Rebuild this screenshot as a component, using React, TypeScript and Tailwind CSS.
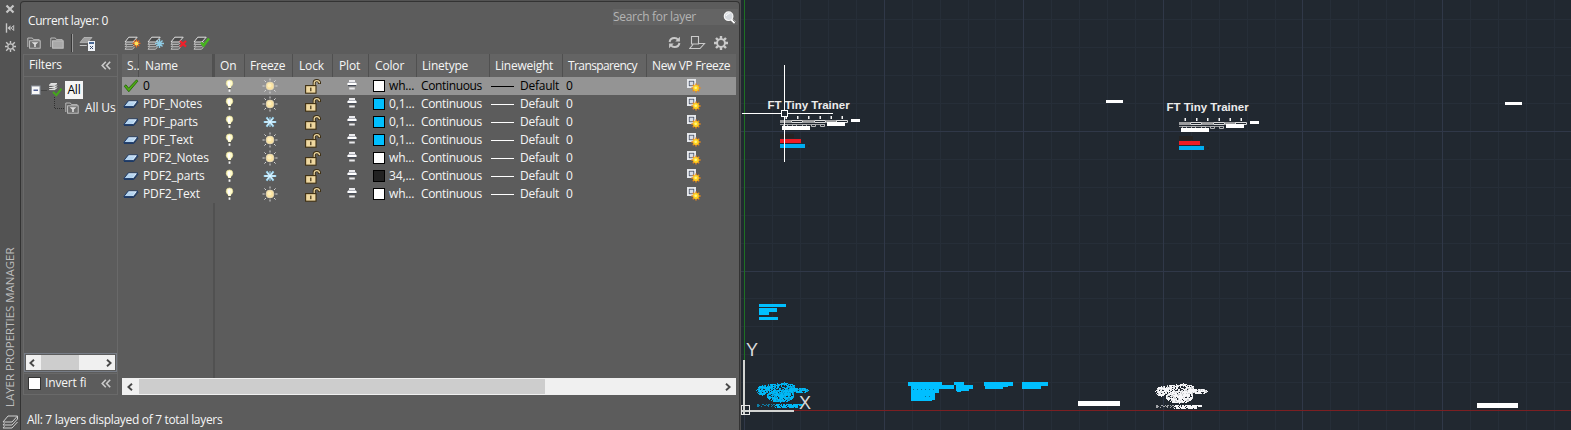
import React from "react";

type Freeze = "sun" | "snow";
type Layer = { name: string; freeze: Freeze; swatch: string; color: string; current?: boolean };

const layers: Layer[] = [
  { name: "0", freeze: "sun", swatch: "#ffffff", color: "wh...", current: true },
  { name: "PDF_Notes", freeze: "sun", swatch: "#00bfff", color: "0,1..." },
  { name: "PDF_parts", freeze: "snow", swatch: "#00bfff", color: "0,1..." },
  { name: "PDF_Text", freeze: "sun", swatch: "#00bfff", color: "0,1..." },
  { name: "PDF2_Notes", freeze: "sun", swatch: "#ffffff", color: "wh..." },
  { name: "PDF2_parts", freeze: "snow", swatch: "#222222", color: "34,..." },
  { name: "PDF2_Text", freeze: "sun", swatch: "#ffffff", color: "wh..." },
];

/* ---------- icons ---------- */

const Check = () => (
  <svg width="16" height="14" viewBox="0 0 16 14" className="block">
    <path d="M1.2 7.2 3 5.8l2.6 3.4L13.6.8l1.2 1.4L5.8 12.8z" fill="#4fae12" stroke="#26640a" strokeWidth="0.9" />
  </svg>
);

const LayerSlab = () => (
  <svg width="16" height="9" viewBox="0 0 16 9" className="block">
    <path d="M5.2 1h9.6L10.4 6.6H.8z" fill="#b4d4f0" stroke="#1d3a66" strokeWidth="1" />
    <path d="M1 7.5h9.8L15.2 2" fill="none" stroke="#1d3a66" strokeWidth="1" />
    <path d="M5.6 1.8h7.6L9.8 5.8" fill="none" stroke="#e8f4ff" strokeWidth="0.8" />
  </svg>
);

const Bulb = () => (
  <svg width="9" height="14" viewBox="0 0 9 14" className="block">
    <circle cx="4.5" cy="4.2" r="3.3" fill="#fffbd0" stroke="#e5dd8c" strokeWidth="0.6" />
    <path d="M2.6 6.5h3.8l-.6 2.6H3.2z" fill="#fffbd0" />
    <path d="M4 2.5v5" stroke="#fff" strokeWidth="2" />
    <rect x="3.2" y="9" width="2.6" height="1.2" fill="#55554a" />
    <rect x="3.6" y="10.4" width="1.8" height="2.4" fill="#f4f4f4" />
  </svg>
);

const Sun = () => (
  <svg width="16" height="16" viewBox="0 0 16 16" className="block">
    <path d="M8 0.5v2M8 13.5v2M.5 8h2.2M13.3 8h2.2M2.4 2.4l1.6 1.6M12 12l1.6 1.6M2.4 13.6l1.6-1.6M12 4l1.6-1.6" stroke="#d4d4d4" strokeWidth="1" />
    <circle cx="8" cy="8" r="3.9" fill="#fbe3a0" stroke="#e2d6b4" strokeWidth="0.9" />
    <circle cx="7.5" cy="7.5" r="2" fill="#fff0bd" />
  </svg>
);

const Snow = () => (
  <svg width="14" height="14" viewBox="0 0 14 14" className="block">
    <path d="M.8 7h12.4M3.5 2.4l7 9.2M3.5 11.6l7-9.2" stroke="#9fd9f5" strokeWidth="2" />
    <path d="M7 2v10" stroke="#9fd9f5" strokeWidth="1" />
    <path d="M2 7h10M4.5 3.7l5 6.6M4.5 10.3l5-6.6" stroke="#e6f7ff" strokeWidth="1" />
  </svg>
);

const OpenLock = () => (
  <svg width="16" height="15" viewBox="0 0 16 15" className="block">
    <path d="M9.2 7V3.8Q9.2 1.6 11.8 1.6 14.6 1.6 14.6 5" fill="none" stroke="#3d2e12" strokeWidth="3" />
    <path d="M9.2 7V3.8Q9.2 1.6 11.8 1.6 14.4 1.6 14.5 4.3" fill="none" stroke="#f0dba4" strokeWidth="1.2" />
    <rect x="0.6" y="6.6" width="10.4" height="7.6" fill="#efd8a0" stroke="#3d2e12" strokeWidth="1.1" />
    <rect x="5.2" y="8.6" width="1.2" height="3.6" fill="#3d2e12" />
  </svg>
);

const Plot = () => (
  <svg width="10" height="12" viewBox="0 0 10 12" className="block">
    <rect x="2" y="1" width="6" height="2" fill="#e9e9ec" />
    <rect x="0.4" y="4" width="9.2" height="2" rx="0.6" fill="#ffffff" />
    <rect x="1" y="3" width="8" height="1" fill="#a9abb3" />
    <rect x="1" y="6" width="8" height="1.2" fill="#474c58" />
    <rect x="2.2" y="8.5" width="5.6" height="2" fill="#e9e9ec" />
  </svg>
);

const VpFreeze = () => (
  <svg width="14" height="14" viewBox="0 0 14 14" className="block">
    <rect x="0.5" y="0.5" width="8" height="8" fill="#fafafa" stroke="#e4e7ec" />
    <rect x="2.2" y="2.2" width="4.6" height="4.6" fill="#d7dce6" stroke="#4a5468" strokeWidth="0.9" />
    <path d="M9 4.4v9.2M4.4 9h9.2M5.8 5.8l6.4 6.4M5.8 12.2l6.4-6.4" stroke="#f08a1a" strokeWidth="1.4" />
    <circle cx="9" cy="9" r="2.9" fill="#ffd21f" />
    <circle cx="8.7" cy="8.7" r="1.3" fill="#fff68a" />
  </svg>
);

const Folder = ({ filter }: { filter?: boolean }) => (
  <svg width="14" height="12" viewBox="0 0 14 12" className="block shrink-0">
    <path d="M.8 10V1h4.6l1 1.6h5.8v1" fill="none" stroke="#b9b9b9" strokeWidth="1" />
    <rect x="2.6" y="3.8" width="10.6" height="7.4" fill={filter ? "#6c6c6c" : "#a8a8a8"} stroke="#c9c9c9" strokeWidth="0.9" />
    {filter && <path d="M4.6 5.2h6.8L8.8 7.6v2.4H7.2V7.6z" fill="#dedede" />}
  </svg>
);

const Stack = ({ children }: { children?: React.ReactNode }) => (
  <svg width="17" height="14" viewBox="0 0 17 14" className="block">
    <path d="M1 10.8l1.5-1.6M1 10.8h7.6l1.6-1.9M1 8.3l1.5-1.6M1 8.3h7.6l2-2.4" fill="none" stroke="#c6c6c6" strokeWidth="1" />
    <path d="M1 13.2h7.6l2-2.4M1 13.2l1.5-1.6" fill="none" stroke="#c6c6c6" strokeWidth="1" />
    <path d="M4.8 1.2h8.4L9 6H1z" fill="#4b4b4b" stroke="#e2e2e2" strokeWidth="1" />
    {children}
  </svg>
);

const StatesIcon = () => (
  <svg width="17" height="16" viewBox="0 0 17 16" className="block">
    <path d="M5 1.5h8L9.4 5.4 8.6 6.6H1z" fill="#a0a0a0" stroke="#bdbdbd" strokeWidth="0.8" />
    <path d="M.8 9.5h7" stroke="#c4c4c4" strokeWidth="1" />
    <rect x="9" y="5" width="7" height="10" fill="#eef2f7" />
    <rect x="10" y="6" width="5" height="2" fill="#4a6a98" />
    <path d="M11 10.5h1M13 10.5h1M12 11.5h1M11 12.5h1M13 12.5h1" stroke="#35486a" strokeWidth="1" />
  </svg>
);

const StripIcons = () => (
  <>
    <svg width="10" height="10" viewBox="0 0 10 10" className="mt-1 block">
      <path d="M1.5 1.5l7 7M8.5 1.5l-7 7" stroke="#c6c6c6" strokeWidth="2.2" />
    </svg>
    <svg width="10" height="10" viewBox="0 0 10 10" className="mt-[9px] block">
      <path d="M1.5.3v9.4" stroke="#c6c6c6" strokeWidth="1.4" />
      <path d="M2.5 5l3-2.7v5.4z" fill="#c6c6c6" />
      <path d="M6.2 5l2.5-2.5v5z" fill="none" stroke="#c6c6c6" strokeWidth="1" />
    </svg>
    <svg width="11" height="11" viewBox="0 0 11 11" className="mt-2 block">
      <path d="M5.5 0v2.6M5.5 8.4V11M0 5.5h2.6M8.4 5.5H11M1.2 1.2l2.2 2.2M7.6 7.6l2.2 2.2M1.2 9.8l2.2-2.2M7.6 3.4l2.2-2.2" stroke="#c6c6c6" strokeWidth="1.4" />
      <circle cx="5.5" cy="5.5" r="2.7" fill="none" stroke="#c6c6c6" strokeWidth="1.2" />
    </svg>
  </>
);

const DoubleChevron = () => (
  <svg width="10" height="9" viewBox="0 0 10 9" className="block">
    <path d="M4.8.7L1.2 4.5l3.6 3.8M9.2.7L5.6 4.5l3.6 3.8" fill="none" stroke="#cacaca" strokeWidth="1.6" />
  </svg>
);

const Arrow = ({ right }: { right?: boolean }) => (
  <svg width="6" height="8" viewBox="0 0 6 8" className="block">
    <path d={right ? "M1 .7L4.7 4 1 7.3" : "M5 .7L1.3 4 5 7.3"} fill="none" stroke="#484848" strokeWidth="1.9" />
  </svg>
);

/* ---------- palette panel ---------- */

const heads: { label: string; cls: string }[] = [
  { label: "S..", cls: "w-[17px] pl-[5px]" },
  { label: "Name", cls: "w-[74px] pl-[6px]" },
  { label: "On", cls: "ml-[2px] w-[30px] pl-[5px]" },
  { label: "Freeze", cls: "w-[48px] pl-[5px] tracking-[-0.3px]" },
  { label: "Lock", cls: "w-[40px] pl-[6px]" },
  { label: "Plot", cls: "w-[36px] pl-[6px]" },
  { label: "Color", cls: "w-[48px] pl-[6px]" },
  { label: "Linetype", cls: "w-[73px] pl-[5px] tracking-[-0.2px]" },
  { label: "Lineweight", cls: "w-[73px] pl-[5px] tracking-[-0.25px]" },
  { label: "Transparency", cls: "w-[84px] pl-[5px] tracking-[-0.6px]" },
  { label: "New VP Freeze", cls: "w-[89px] pl-[5px] border-r-0 tracking-[-0.35px]" },
];

const Row = ({ layer }: { layer: Layer }) => (
  <div className={layer.current ? "flex h-[18px] items-center bg-[#949494] text-black" : "flex h-[18px] items-center text-[#f6f6f6]"}>
    <div className="w-[21px] shrink-0 pl-px">{layer.current ? <Check /> : <LayerSlab />}</div>
    <div className="w-[71px] shrink-0">{layer.name}</div>
    <div className="flex w-[31px] shrink-0 justify-center pb-px"><Bulb /></div>
    <div className="flex w-[48px] shrink-0 justify-center pl-px"><div>{layer.freeze === "sun" ? <Sun /> : <Snow />}</div></div>
    <div className="flex w-[40px] shrink-0 justify-center">
      <OpenLock />
    </div>
    <div className="flex w-[36px] shrink-0 justify-center pb-[2px] pl-px"><Plot /></div>
    <div className="flex w-[50px] shrink-0 items-center gap-1 pl-1">
      <svg width="12" height="12" className="block shrink-0">
        <rect x="0.5" y="0.5" width="11" height="11" fill={layer.swatch} stroke="#000" />
      </svg>
      <span>{layer.color}</span>
    </div>
    <div className="w-[72px] shrink-0 pl-[2px] tracking-[-0.35px]">Continuous</div>
    <div className="flex w-[75px] shrink-0 items-center gap-[6px] tracking-[-0.25px]">
      <div className={layer.current ? "h-px w-[23px] bg-black" : "h-px w-[23px] bg-white"} />
      <span>Default</span>
    </div>
    <div className="w-[78px] shrink-0">0</div>
    <div className="pl-[43px]"><VpFreeze /></div>
  </div>
);

const Palette = () => (
  <div className="flex h-full w-[720px] shrink-0 flex-col rounded-tl-sm rounded-tr-sm border-l border-r border-t border-[#333] bg-[#5c5c5c]">
    <div className="flex h-[31px] justify-between">
      <div className="pl-[7px] pt-[11px] leading-4 tracking-[-0.42px]">Current layer: 0</div>
      <div className="mr-px mt-[7px] flex h-4 w-[125px] items-center justify-between bg-[#646464] pr-[2px]">
        <span className="tracking-[-0.3px] text-[#b4b4b4]">Search for layer</span>
        <svg width="13" height="13" viewBox="0 0 13 13" className="block">
          <path d="M8.5 8.5l3.4 3.2" stroke="#fff" strokeWidth="2.6" />
          <path d="M9.6 8.4l3 2.9" stroke="#222" strokeWidth="0.8" />
          <circle cx="5.6" cy="5.2" r="4.3" fill="#d5d9de" stroke="#f7f7f7" strokeWidth="1.2" />
          <path d="M3 5q1-2.6 3.6-2.4" stroke="#fff" fill="none" />
        </svg>
      </div>
    </div>
    <div className="flex h-[21px] items-center pb-[2px] pl-[6px]">
      <Folder filter />
      <div className="ml-[9px]"><Folder /></div>
      <div className="ml-[7px] h-[18px] w-px bg-[#383838]" />
      <div className="h-[18px] w-px bg-[#9a9a9a]" />
      <div className="ml-[6px] mt-[3px]"><StatesIcon /></div>
      <div className="ml-7 flex gap-[6px]">
        <Stack>
          <path d="M12.5 3.4v8M8.6 7.4h7.8M9.8 4.7l5.4 5.4M9.8 10.1l5.4-5.4" stroke="#f26a1b" strokeWidth="1.2" />
          <circle cx="12.5" cy="7.4" r="2" fill="#ffe25a" />
        </Stack>
        <Stack>
          <path d="M12.5 3v9M8 7.5h9M9.5 4.5l6 6M9.5 10.5l6-6" stroke="#8fcbe4" strokeWidth="1.4" />
        </Stack>
        <Stack>
          <path d="M10 5l6 5.6M16 5l-6 5.6" stroke="#f0202a" strokeWidth="2.2" />
        </Stack>
        <Stack>
          <path d="M8 6.5l2.6 3L16 2.6" fill="none" stroke="#46b51e" strokeWidth="2.5" />
        </Stack>
      </div>
      <div className="ml-auto mr-[11px] flex items-center gap-2">
        <svg width="13" height="13" viewBox="0 0 13 13" className="block">
          <path d="M1.6 6Q2.2 2 6.4 2q2.4 0 3.6 1.8M11.4 7q-.6 4-4.8 4Q4.2 11 3 9.2" fill="none" stroke="#cacaca" strokeWidth="2" />
          <path d="M11.9.7v4.9H7.3zM1.1 12.3V7.4h4.6z" fill="#cacaca" />
        </svg>
        <svg width="17" height="14" viewBox="0 0 17 14" className="block">
          <path d="M2.5.5h7v7.500h-7zM9.500 7.500H15.500L11 12.500H.8L4 8.500" fill="none" stroke="#cacaca" strokeWidth="1.1" />
        </svg>
        <svg width="14" height="14" viewBox="0 0 14 14" className="block">
          <path d="M7 0v3M7 11v3M0 7h3M11 7h3M2 2l2.2 2.2M9.8 9.8L12 12M2 12l2.2-2.2M9.8 4.2L12 2" stroke="#cacaca" strokeWidth="2.4" />
          <circle cx="7" cy="7" r="3.9" fill="none" stroke="#cacaca" strokeWidth="1.9" />
        </svg>
      </div>
    </div>
    <div className="flex h-[341px] pl-[2px]">
      <div className="flex w-[95px] flex-col border border-[#696969]">
        <div className="flex h-[22px] items-center justify-between border-b border-[#696969] pl-[5px] pr-[6px] pb-px">
          <span>Filters</span>
          <DoubleChevron />
        </div>
        <div className="flex flex-1 flex-col overflow-hidden pt-[4px]">
          <div className="flex h-[18px] items-center pl-[7px]">
            <svg width="16" height="10" viewBox="0 0 16 10" className="block shrink-0">
              <rect x="0.5" y="1" width="8.5" height="8.5" fill="#f8f8f8" stroke="#8b929c" />
              <path d="M2.5 5.2H7" stroke="#26397a" strokeWidth="1.2" />
              <path d="M10.5 5.5H16" stroke="#303030" strokeDasharray="1 1" />
            </svg>
            <svg width="15" height="16" viewBox="0 0 15 16" className="ml-px block shrink-0">
              <path d="M3 1.500h6L7 3.300H1.200zM1.200 5.500H7l2-2M1.200 7.600H7l2-2" fill="#ddd" stroke="#e2e2e2" strokeWidth="1" />
              <path d="M5 10l3.300 3.300 5.200-6.600" fill="none" stroke="#45a71c" strokeWidth="2" />
            </svg>
            <span className="ml-[2px] flex h-[18px] w-[18px] items-center justify-center bg-[#f4f4f4] text-black">All</span>
          </div>
          <div className="flex h-[18px] items-center pl-[29px]">
            <svg width="12" height="18" className="-mt-[16px] block shrink-0">
              <path d="M1.5 6v11.5" stroke="#303030" strokeDasharray="1 1" />
              <path d="M2 17.5H12" stroke="#303030" strokeDasharray="1 1" />
            </svg>
            <Folder filter />
            <span className="ml-[6px] whitespace-pre tracking-[-0.1px]">All Us</span>
          </div>
        </div>
        <div className="border border-[#777d87] p-px">
          <div className="flex h-[15px] items-center bg-[#f0f0f0]">
            <div className="flex w-[15px] shrink-0 justify-center pr-[3px]"><Arrow /></div>
            <div className="h-full w-[38px] shrink-0 bg-[#cdcdcd]" />
            <div className="ml-auto mr-[3px]"><Arrow right /></div>
          </div>
        </div>
        <div className="mt-px flex h-[21px] items-center border-t border-[#696969] pb-[2px] pl-[4px] pr-[6px]">
          <div className="h-[13px] w-[13px] border border-[#333] bg-white" />
          <span className="ml-[4px]">Invert fi</span>
          <div className="ml-auto"><DoubleChevron /></div>
        </div>
      </div>
      <div className="ml-[4px] flex w-[614px] flex-col">
        <div className="flex h-[23px] bg-[#515151]">
          {heads.map((h) => (
            <div key={h.label} className={"flex shrink-0 items-center whitespace-nowrap border-r border-[#505050] bg-[#646464] " + h.cls}>{h.label}</div>
          ))}
        </div>
        {layers.map((l) => <Row key={l.name} layer={l} />)}
        <div className="flex flex-1">
          <div className="w-[93px] border-r-2 border-[#515151]" />
        </div>
        <div className="flex h-[17px] items-center bg-[#f0f0f0]">
          <div className="flex w-[17px] justify-center pr-px"><Arrow /></div>
          <div className="my-px h-[15px] w-[406px] bg-[#cdcdcd]" />
          <div className="ml-auto mr-[5px]"><Arrow right /></div>
        </div>
      </div>
    </div>
    <div className="pl-[6px] pt-[17px] leading-4 tracking-[-0.32px]">All: 7 layers displayed of 7 total layers</div>
  </div>
);

/* ---------- drawing area ---------- */

type Box = [number, number, number, number];

const Boxes = ({ list, fill }: { list: Box[]; fill: string }) => (
  <g fill={fill}>
    {list.map(([x, y, w, h], i) => <rect key={i} x={x} y={y} width={w} height={h} />)}
  </g>
);

/* Ellipses (cx, cy, rx, ry, density) that make up the aircraft part sheet. */
const lumps = [
  [762, 390, 6, 5, 0.85],
  [770, 386.5, 8, 2.6, 0.85],
  [777, 385, 5, 2, 0.7],
  [784, 383.5, 4, 1.5, 0.7],
  [790, 386.5, 5, 3, 0.88],
  [799, 390, 9, 2.8, 0.88],
  [780, 395.5, 13.5, 6.5, 0.95],
  [780, 390, 20, 4, 0.62],
];

const partDots = (() => {
  let seed = 20117;
  const rnd = () => (seed = (seed * 16807) % 2147483647) / 2147483647;
  const out: { x: number; y: number; o: number }[] = [];
  for (let y = 382; y < 403; y++)
    for (let x = 756; x < 809; x++) {
      const d = Math.max(...lumps.map(([cx, cy, rx, ry, k]) => (((x - cx) / rx) ** 2 + ((y - cy) / ry) ** 2 <= 1 ? k : 0)));
      if (rnd() < d) out.push({ x, y, o: rnd() > 0.25 ? 1 : 0.8 });
    }
  for (let y = 404; y < 408; y++)
    for (let x = 757; x < 803; x++)
      if (rnd() < (x < 775 ? (y < 407 ? 0.42 : 0) : 0.84) && !(x > 797 && y > 405)) out.push({ x, y, o: x < 775 ? 0.6 : 1 });
  return out;
})();

const PartSheet = ({ fill }: { fill: string }) => (
  <g fill={fill} shapeRendering="crispEdges">
    {partDots.map((d, i) => <rect key={i} x={d.x} y={d.y} width="1" height="1" opacity={d.o} />)}
  </g>
);

const TitleSheet = () => (
  <g>
    <text x="767.5" y="109.3" textLength="82" fill="#ececec" fontSize="11.5" fontWeight="700" fontFamily="'Liberation Sans', Arial, sans-serif">FT Tiny Trainer</text>
    <Boxes fill="#f4f4f4" list={[[785.5, 116, 1.5, 3], [797, 116, 1.5, 3], [808, 116, 1.5, 3], [819.5, 116, 1.5, 3], [830.5, 116, 1.5, 3], [841.5, 116, 1.5, 3]]} />
    <Boxes fill="#9c9d9f" list={[[780, 120, 11, 3], [803, 120, 11, 3], [826, 120, 11, 3], [780, 124, 45, 1]]} />
    <g fill="none" stroke="#dcdcdc">
      <path d="M791.5 120.5h11v2h-11zM814.5 120.5h11v2h-11zM836.5 120.5h11v2h-11z" />
      <path d="M783.5 124.5h4v2h-4zM792.5 124.5h4v2h-4zM802.5 124.5h4v2h-4zM811.5 124.5h4v2h-4zM820.5 124.5h4v2h-4z" stroke="#b4b5b7" />
    </g>
    <Boxes fill="#ffffff" list={[[851, 119, 9, 3], [827, 122, 18, 4], [782, 126, 28, 4]]} />
    <Boxes fill="#252322" list={[[780, 134, 14, 4], [808, 145, 2, 2]]} />
    <Boxes fill="#ec1c24" list={[[780, 139, 21, 4]]} />
    <Boxes fill="#00adf0" list={[[780, 144, 25, 4]]} />
  </g>
);

const gridX = Array.from({ length: 30 }, (_, i) => i);
const gridY = Array.from({ length: 16 }, (_, i) => i);

const Drawing = () => (
  <svg width="830" height="430" viewBox="741 0 830 430" className="block shrink-0 bg-[#212830]">
    <g shapeRendering="crispEdges">
      {gridX.map((i) => i % 5 !== 0 && <rect key={i} x={Math.round(744.3 + i * 27.91)} y="0" width="1" height="430" fill="#262e38" />)}
      {gridY.map((i) => i % 5 !== 0 && <rect key={i} x="741" y={Math.round(410 - i * 27.9)} width="830" height="1" fill="#262e38" />)}
      {gridX.map((i) => i % 5 === 0 && <rect key={i} x={Math.round(744.2 + i * 27.91)} y="0" width="1" height="430" fill="#303848" />)}
      {gridY.map((i) => i % 5 === 0 && <rect key={i} x="741" y={Math.round(410.4 - i * 27.9)} width="830" height="1" fill="#303848" />)}
      <rect x="744" y="0" width="1" height="362" fill="#1f7023" />
      <rect x="790" y="410" width="781" height="1" fill="#7c1f22" />
    </g>
    <TitleSheet />
    <g transform="translate(399 2)"><TitleSheet /></g>
    <Boxes fill="#ffffff" list={[[1106, 100, 17, 3], [1505, 102, 17, 3], [1078, 401, 42, 5], [1477, 403, 41, 5]]} />
    <Boxes fill="#00bfff" list={[
      [759, 304, 27, 3], [759, 308, 18, 4], [759, 312, 10, 3], [759, 317, 19, 3],
      [908, 382, 34, 4], [911, 385, 43, 4], [911, 389, 28, 4], [911, 393, 24, 7], [911, 400, 21, 1],
      [954, 382, 10, 3], [956, 385, 17, 4], [956, 389, 13, 2], [957, 391, 4, 1],
      [984, 382, 29, 4], [985, 386, 18, 3], [1003, 386, 5, 1],
      [1022, 382, 26, 4], [1022, 386, 19, 3],
    ]} />
    <path d="M913 389.5h22M925 396.5h8" stroke="#0a6f96" strokeDasharray="1 3" />
    <PartSheet fill="#00b8f6" />
    <g transform="translate(399 1)"><PartSheet fill="#f6f6f8" /></g>
    <g fill="none" stroke="#e6e6e6" shapeRendering="crispEdges">
      <path d="M744 360v54M742 411h52" strokeWidth="2" stroke="#d2d4d2" />
      <rect x="741.5" y="405.5" width="8" height="9" />
    </g>
    <g fill="#dadbdc" fontFamily="'Liberation Sans', Arial, sans-serif" fontSize="18">
      <text x="746" y="356">Y</text>
      <text x="799" y="409">X</text>
    </g>
    <g fill="none" stroke="#ffffff" shapeRendering="crispEdges">
      <path d="M784.5 65v45M784.5 117v45M742 113.5h39M788 113.5h45" />
      <rect x="781.5" y="110.5" width="6" height="6" fill="#212830" />
    </g>
  </svg>
);

export default function App() {
  return (
    <div className="flex h-[430px] w-[1571px] overflow-hidden bg-[#535353] font-['Open_Sans','Noto_Sans',sans-serif] text-[12px] leading-none tracking-[-0.15px] text-[#f6f6f6] [font-stretch:92%]">
      <div className="flex w-5 shrink-0 flex-col items-center">
        <StripIcons />
        <div className="mt-auto flex h-[161px] rotate-180 items-center whitespace-nowrap text-[11.5px] tracking-[-0.03px] text-[#bdbdbd] [writing-mode:vertical-rl]">LAYER PROPERTIES MANAGER</div>
        <svg width="16" height="15" viewBox="0 0 16 15" className="mt-2 block">
          <path d="M6 1h9.500L10 7H1zM1 10h9l5.500-6M1 13h9l5.500-6M1 10l1.500-1.800M1 13l1.500-1.800M15.500 1v3" fill="none" stroke="#d0d0d0" strokeWidth="1" />
        </svg>
      </div>
      <div className="h-full pt-px"><Palette /></div>
      <div className="w-px shrink-0 bg-[#4c4c4c]" />
      <Drawing />
    </div>
  );
}
